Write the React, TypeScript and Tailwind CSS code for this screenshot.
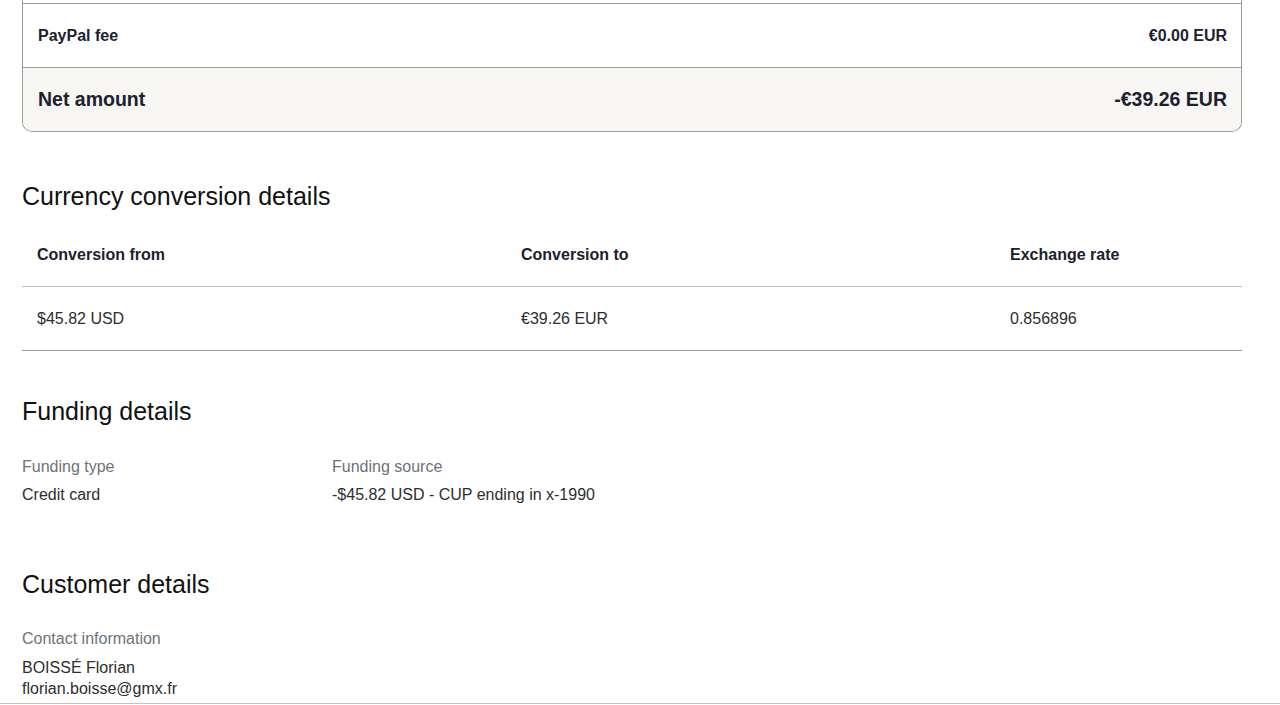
import React from "react";

const font = { fontFamily: '"Liberation Sans", Arial, sans-serif' };

export default function App() {
  return (
    <div className="w-[1280px] h-[705px] bg-white overflow-hidden" style={font}>
      <div className="h-[704px] border-b border-[#c4c4bc] px-[22px] overflow-hidden">
        {/* Summary box (continues above viewport) */}
        <div className="w-[1220px] border-x border-b border-[#9b9b9b] rounded-b-[10px] pt-[3px] overflow-hidden">
          <div className="h-[64px] border-t border-[#9b9b9b] flex items-center justify-between pl-[15px] pr-[14px] text-[16px] font-bold text-[#1c2130]">
            <span>PayPal fee</span>
            <span>€0.00 EUR</span>
          </div>
          <div className="h-[64px] border-t border-[#9b9b9b] bg-[#f7f6f3] flex items-center justify-between pl-[15px] pr-[14px] text-[19.5px] font-bold text-[#1c2130]">
            <span>Net amount</span>
            <span>-€39.26 EUR</span>
          </div>
        </div>

        {/* Currency conversion */}
        <h2 className="mt-[48px] h-[32px] leading-[32px] text-[25px] text-[#111] font-normal">Currency conversion details</h2>
        <div className="mt-[11px] w-[1220px]">
          <div className="grid grid-cols-[484px_489px_1fr] h-[64px] items-center border-b border-[#bdbdbd] text-[16px] font-bold text-[#1c2130]">
            <span className="pl-[15px]">Conversion from</span>
            <span className="pl-[15px]">Conversion to</span>
            <span className="pl-[15px]">Exchange rate</span>
          </div>
          <div className="grid grid-cols-[484px_489px_1fr] h-[64px] items-center border-b border-[#9b9b9b] text-[16px] text-[#2c2e2f]">
            <span className="pl-[15px]">$45.82 USD</span>
            <span className="pl-[15px]">€39.26 EUR</span>
            <span className="pl-[15px]">0.856896</span>
          </div>
        </div>

        {/* Funding details */}
        <h2 className="mt-[44px] h-[32px] leading-[32px] text-[25px] text-[#111] font-normal">Funding details</h2>
        <div className="mt-[30px] grid grid-cols-[310px_1fr] gap-y-[8px] text-[16px] leading-[20px]">
          <span className="text-[#6c7378]">Funding type</span>
          <span className="text-[#6c7378]">Funding source</span>
          <span className="text-[#2c2e2f]">Credit card</span>
          <span className="text-[#2c2e2f]">-$45.82 USD - CUP ending in x-1990</span>
        </div>

        {/* Customer details */}
        <h2 className="mt-[63px] h-[32px] leading-[32px] text-[25px] text-[#111] font-normal">Customer details</h2>
        <div className="mt-[29px] text-[16px] leading-[20px]">
          <div className="text-[#6c7378]">Contact information</div>
          <div className="mt-[9px] text-[#2c2e2f]">BOISSÉ Florian</div>
          <div className="mt-[1px] text-[#2c2e2f]">florian.boisse@gmx.fr</div>
        </div>
      </div>
    </div>
  );
}
